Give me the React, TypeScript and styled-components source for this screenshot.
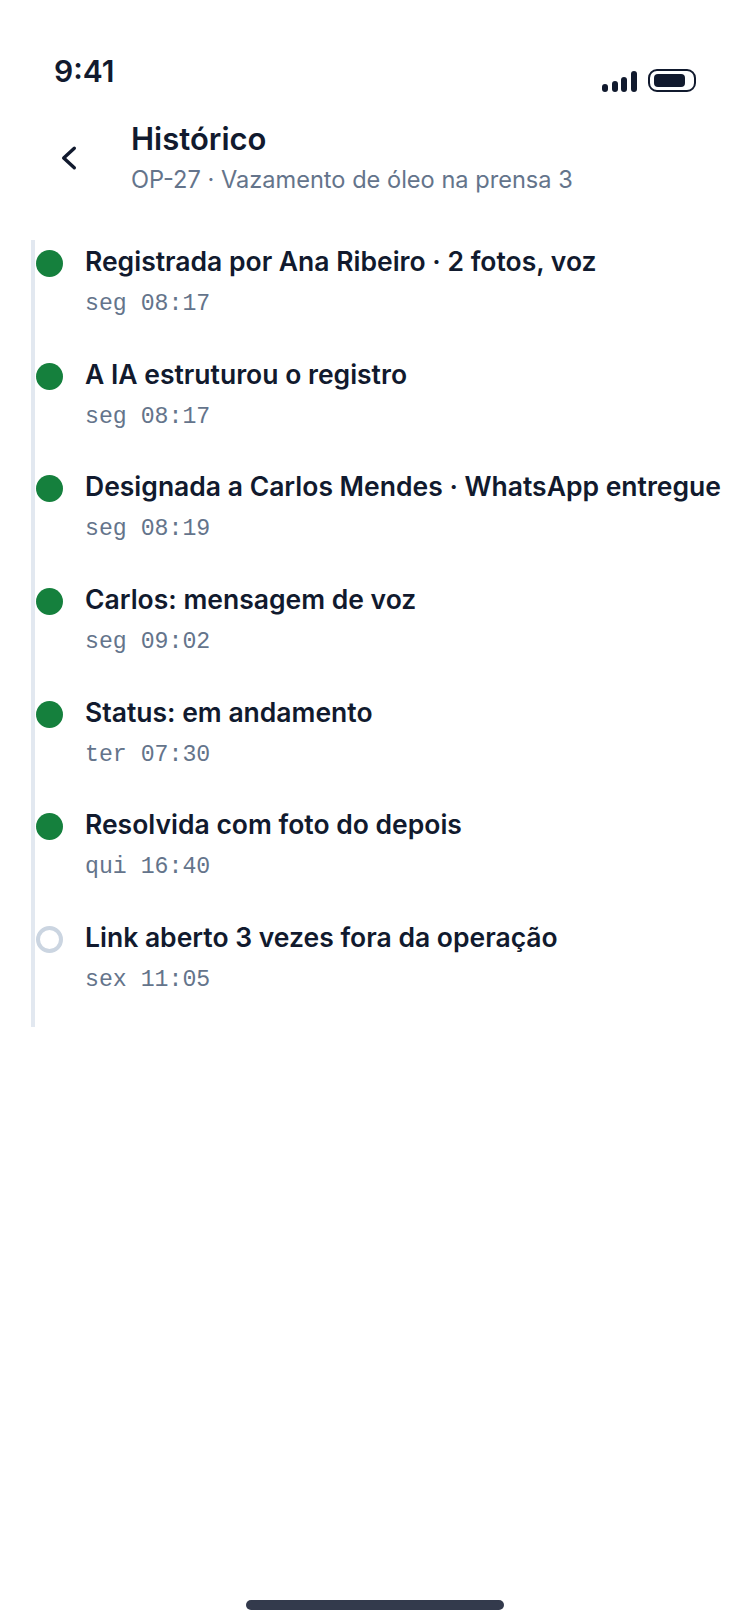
import React from "react";
import styled, { createGlobalStyle } from "styled-components";

const GlobalStyle = createGlobalStyle`
  html, body {
    margin: 0;
    padding: 0;
    background: #fff;
  }
`;

const Screen = styled.div`
  width: 750px;
  height: 1624px;
  display: flex;
  flex-direction: column;
  font-family: "Inter", "Noto Sans", sans-serif;
  color: #111a2e;
  overflow: hidden;
`;

const StatusBar = styled.div`
  height: 72px;
  padding: 50px 53px 0 54px;
  display: flex;
  justify-content: space-between;
`;

const Clock = styled.span`
  font-size: 30px;
  line-height: 42px;
  font-weight: 600;
`;

const StatusIcons = styled.svg`
  margin-top: 19px;
`;

const Header = styled.div`
  display: flex;
  align-items: center;
  box-sizing: border-box;
  padding: 0 0 2px 56px;
  height: 76px;
`;

const BackIcon = styled.svg`
  flex: none;
  margin-right: 51px;
  margin-bottom: 3px;
`;

const Title = styled.h1`
  margin: 0;
  font-size: 31px;
  line-height: 38px;
  font-weight: 600;
`;

const Subtitle = styled.p`
  margin: 4px 0 0;
  font-size: 23.6px;
  line-height: 36px;
  color: #64748b;
`;

const Timeline = styled.ul`
  list-style: none;
  margin: 42px 0 0 31px;
  padding: 0;
  border-left: 4px solid #e2e8f0;
  width: 715px;
  box-sizing: border-box;
`;

const Event = styled.li`
  display: flex;
  align-items: flex-start;
  gap: 22px;
  padding: 0 0 0 1px;
  height: 112.7px;

  &:last-child {
    height: 111px;
  }
`;

const Dot = styled.span<{ $open?: boolean }>`
  flex: none;
  width: 27px;
  height: 27px;
  margin-top: 10px;
  border-radius: 50%;
  box-sizing: border-box;
  background: ${(p) => (p.$open ? "#fff" : "#15803d")};
  border: ${(p) => (p.$open ? "4px solid #cbd5e1" : "none")};
`;

const EventTitle = styled.div`
  font-size: 26.5px;
  line-height: 43px;
  font-weight: 600;
  white-space: nowrap;
`;

const EventTime = styled.div`
  font-family: "Liberation Mono", "DejaVu Sans Mono", monospace;
  font-size: 23.2px;
  line-height: 36px;
  margin-top: 3px;
  color: #64748b;
`;

const HomeBar = styled.div`
  width: 258px;
  height: 10px;
  border-radius: 5px;
  background: #333a4c;
  margin: auto auto 14px;
`;

const events = [
  { title: "Registrada por Ana Ribeiro · 2 fotos, voz", time: "seg 08:17" },
  { title: "A IA estruturou o registro", time: "seg 08:17" },
  { title: "Designada a Carlos Mendes · WhatsApp entregue", time: "seg 08:19" },
  { title: "Carlos: mensagem de voz", time: "seg 09:02" },
  { title: "Status: em andamento", time: "ter 07:30" },
  { title: "Resolvida com foto do depois", time: "qui 16:40" },
  { title: "Link aberto 3 vezes fora da operação", time: "sex 11:05", open: true },
];

export default function App() {
  return (
    <Screen>
      <GlobalStyle />
      <StatusBar>
        <Clock>9:41</Clock>
        <StatusIcons width="95" height="24" viewBox="0 0 95 24" fill="#111a2e">
          <rect x="0" y="15" width="6" height="8" rx="3" />
          <rect x="10" y="12" width="6" height="11" rx="3" />
          <rect x="19" y="8" width="6" height="15" rx="3" />
          <rect x="29" y="2" width="6" height="21" rx="3" />
          <rect x="47" y="1" width="46" height="21" rx="8" fill="none" stroke="#111a2e" strokeWidth="2" />
          <rect x="52" y="5" width="31" height="13" rx="4" />
        </StatusIcons>
      </StatusBar>
      <Header>
        <BackIcon width="24" height="28" viewBox="0 0 24 28" fill="none" stroke="#111a2e" strokeWidth="3.4" strokeLinecap="round" strokeLinejoin="round">
          <path d="M18.3 4.2 L7.7 14 L18.3 23.8" />
        </BackIcon>
        <div>
          <Title>Histórico</Title>
          <Subtitle>OP-27 · Vazamento de óleo na prensa 3</Subtitle>
        </div>
      </Header>
      <Timeline>
        {events.map((ev) => (
          <Event key={ev.title}>
            <Dot $open={ev.open} />
            <div>
              <EventTitle>{ev.title}</EventTitle>
              <EventTime>{ev.time}</EventTime>
            </div>
          </Event>
        ))}
      </Timeline>
      <HomeBar />
    </Screen>
  );
}
